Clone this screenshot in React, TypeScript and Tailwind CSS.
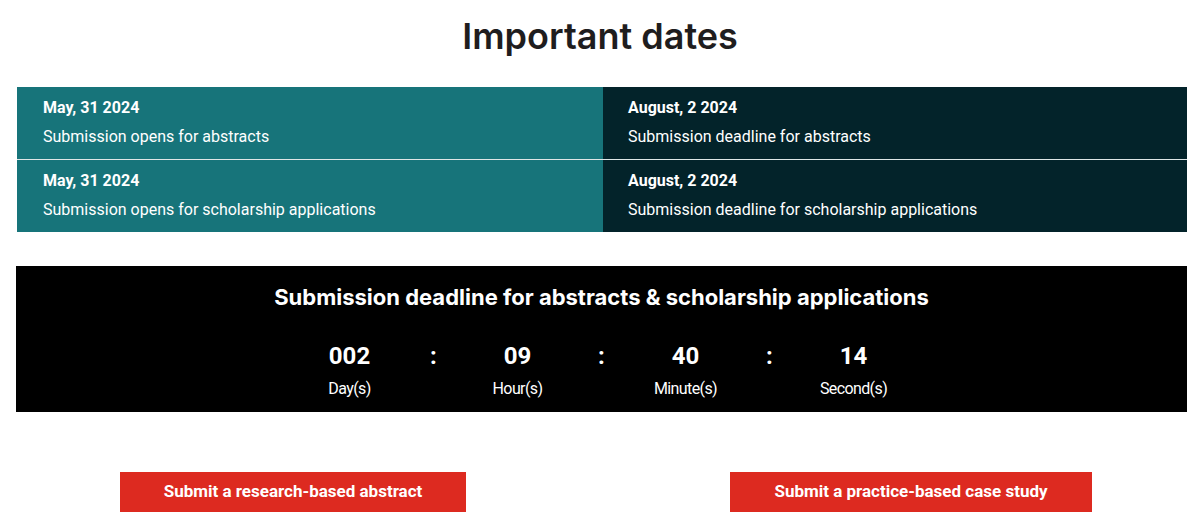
const dates = [
  [
    { date: "May, 31 2024", text: "Submission opens for abstracts" },
    { date: "August, 2 2024", text: "Submission deadline for abstracts" },
  ],
  [
    { date: "May, 31 2024", text: "Submission opens for scholarship applications" },
    { date: "August, 2 2024", text: "Submission deadline for scholarship applications" },
  ],
]

const countdown = [
  { value: "002", label: "Day(s)" },
  { value: "09", label: "Hour(s)" },
  { value: "40", label: "Minute(s)" },
  { value: "14", label: "Second(s)" },
]

export default function App() {
  return (
    <div className="w-[1200px] h-[532px] overflow-hidden bg-white font-['Roboto',sans-serif]">
      <h1 className="pt-[14px] text-center text-[36px] leading-[44px] font-semibold text-[#1f1d1e] font-['Inter',sans-serif]">
        Important dates
      </h1>

      <div className="mt-[29px] mx-[17px] w-[1170px]">
        {dates.map((row, i) => (
          <div key={i} className={`flex ${i > 0 ? "border-t border-[#dfe6e6]" : ""}`}>
            <div className="w-[586px] h-[72px] bg-[#17747a] pl-[26px] pt-[12px] text-white">
              <p className="text-[16px] leading-[18px] font-bold">{row[0].date}</p>
              <p className="mt-[9px] text-[16px] leading-[22px]">{row[0].text}</p>
            </div>
            <div className="flex-1 h-[72px] bg-[#03232a] pl-[25px] pt-[12px] text-white">
              <p className="text-[16px] leading-[18px] font-bold">{row[1].date}</p>
              <p className="mt-[9px] text-[16px] leading-[22px]">{row[1].text}</p>
            </div>
          </div>
        ))}
      </div>

      <div className="mt-[34px] ml-[16px] w-[1171px] bg-black pt-[17px] pb-[13px] text-white">
        <h2 className="text-center text-[22px] leading-[28px] font-bold font-['Inter',sans-serif]">
          Submission deadline for abstracts &amp; scholarship applications
        </h2>
        <div className="mt-[30px] flex justify-center">
          {countdown.map((c, i) => (
            <div key={c.label} className="flex">
              {i > 0 && (
                <div className="w-[48px] text-center text-[24px] leading-[30px] font-bold">:</div>
              )}
              <div className="w-[120px] flex flex-col items-center">
                <span className="text-[24px] leading-[30px] font-bold">{c.value}</span>
                <span className="mt-[8px] text-[16px] leading-[20px] tracking-[-0.6px]">{c.label}</span>
              </div>
            </div>
          ))}
        </div>
      </div>

      <div className="mt-[60px] flex">
        <div className="w-[586px] flex justify-center">
          <button className="h-[40px] px-[44px] bg-[#dd2a20] text-white text-[17px] font-bold">
            Submit a research-based abstract
          </button>
        </div>
        <div className="ml-[36px] w-[578px] flex justify-center">
          <button className="h-[40px] px-[44px] bg-[#dd2a20] text-white text-[17px] font-bold">
            Submit a practice-based case study
          </button>
        </div>
      </div>
    </div>
  )
}
